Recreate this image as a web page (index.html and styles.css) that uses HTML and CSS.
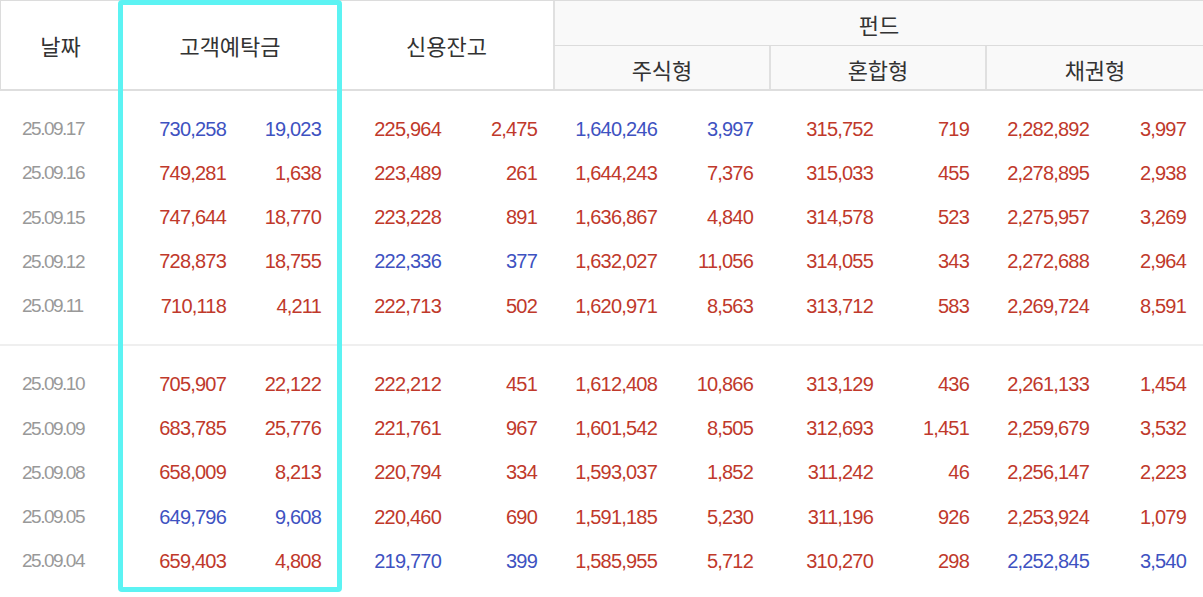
FILE: index.html
```html
<!DOCTYPE html>
<html lang="ko">
<head>
<meta charset="utf-8">
<title>증시 자금 동향</title>
<link rel="stylesheet" href="styles.css">
</head>
<body>
<div class="board">
  <div class="head">
    <div class="hc span2 first">날짜</div>
    <div class="hc span2">고객예탁금</div>
    <div class="hc span2">신용잔고</div>
    <div class="hc fund fund-top">펀드</div>
    <div class="hc fund sub sub-first">주식형</div>
    <div class="hc fund sub">혼합형</div>
    <div class="hc fund sub">채권형</div>
  </div>

  <div class="group">
    <div class="row"><span class="d">25.09.17</span><span class="b">730,258</span><span class="b">19,023</span><span class="r">225,964</span><span class="r">2,475</span><span class="b">1,640,246</span><span class="b">3,997</span><span class="r">315,752</span><span class="r">719</span><span class="r">2,282,892</span><span class="r">3,997</span></div>
    <div class="row"><span class="d">25.09.16</span><span class="r">749,281</span><span class="r">1,638</span><span class="r">223,489</span><span class="r">261</span><span class="r">1,644,243</span><span class="r">7,376</span><span class="r">315,033</span><span class="r">455</span><span class="r">2,278,895</span><span class="r">2,938</span></div>
    <div class="row"><span class="d">25.09.15</span><span class="r">747,644</span><span class="r">18,770</span><span class="r">223,228</span><span class="r">891</span><span class="r">1,636,867</span><span class="r">4,840</span><span class="r">314,578</span><span class="r">523</span><span class="r">2,275,957</span><span class="r">3,269</span></div>
    <div class="row"><span class="d">25.09.12</span><span class="r">728,873</span><span class="r">18,755</span><span class="b">222,336</span><span class="b">377</span><span class="r">1,632,027</span><span class="r">11,056</span><span class="r">314,055</span><span class="r">343</span><span class="r">2,272,688</span><span class="r">2,964</span></div>
    <div class="row"><span class="d">25.09.11</span><span class="r">710,118</span><span class="r">4,211</span><span class="r">222,713</span><span class="r">502</span><span class="r">1,620,971</span><span class="r">8,563</span><span class="r">313,712</span><span class="r">583</span><span class="r">2,269,724</span><span class="r">8,591</span></div>
  </div>
  <div class="group sep">
    <div class="row"><span class="d">25.09.10</span><span class="r">705,907</span><span class="r">22,122</span><span class="r">222,212</span><span class="r">451</span><span class="r">1,612,408</span><span class="r">10,866</span><span class="r">313,129</span><span class="r">436</span><span class="r">2,261,133</span><span class="r">1,454</span></div>
    <div class="row"><span class="d">25.09.09</span><span class="r">683,785</span><span class="r">25,776</span><span class="r">221,761</span><span class="r">967</span><span class="r">1,601,542</span><span class="r">8,505</span><span class="r">312,693</span><span class="r">1,451</span><span class="r">2,259,679</span><span class="r">3,532</span></div>
    <div class="row"><span class="d">25.09.08</span><span class="r">658,009</span><span class="r">8,213</span><span class="r">220,794</span><span class="r">334</span><span class="r">1,593,037</span><span class="r">1,852</span><span class="r">311,242</span><span class="r">46</span><span class="r">2,256,147</span><span class="r">2,223</span></div>
    <div class="row"><span class="d">25.09.05</span><span class="b">649,796</span><span class="b">9,608</span><span class="r">220,460</span><span class="r">690</span><span class="r">1,591,185</span><span class="r">5,230</span><span class="r">311,196</span><span class="r">926</span><span class="r">2,253,924</span><span class="r">1,079</span></div>
    <div class="row"><span class="d">25.09.04</span><span class="r">659,403</span><span class="r">4,808</span><span class="b">219,770</span><span class="b">399</span><span class="r">1,585,955</span><span class="r">5,712</span><span class="r">310,270</span><span class="r">298</span><span class="b">2,252,845</span><span class="b">3,540</span></div>
  </div>

  <div class="highlight"></div>
</div>
</body>
</html>
```

FILE: styles.css
```css
html, body {
  margin: 0;
  padding: 0;
  background: #ffffff;
}

body {
  width: 1203px;
  height: 597px;
  overflow: hidden;
  font-family: "Liberation Sans", "Noto Sans CJK KR", sans-serif;
}

.board {
  position: relative;
  width: 1203px;
}

/* ---------- header ---------- */
.head {
  display: grid;
  grid-template-columns: 120px 220px 213px 216px 216px 1fr;
  grid-template-rows: 45px 43px;
  border-top: 1px solid #dcdcdc;
  border-bottom: 2px solid #dedede;
  font-family: "Noto Sans CJK KR", "Liberation Sans", sans-serif;
  font-size: 22px;
  color: #333333;
}

.hc {
  display: flex;
  align-items: center;
  justify-content: center;
  background: #ffffff;
}

.span2 {
  grid-row: span 2;
}

.first {
  border-left: 1px solid #dcdcdc;
}

.fund {
  background: #f9f9f9;
}

.fund-top {
  grid-column: 4 / 7;
  border-left: 2px solid #e0e0e0;
  border-bottom: 1px solid #dcdcdc;
  padding-top: 1px;
}

.sub {
  border-left: 2px solid #e0e0e0;
  padding-top: 2px;
}

.sub-first {
  border-left: 2px solid #e0e0e0;
}

/* ---------- body ---------- */
.group {
  padding: 16px 0;
}

.group.sep {
  border-top: 2px solid #efefef;
}

.row {
  display: grid;
  grid-template-columns: 120px 106px 95px 120px 96px 120px 96px 120px 96px 120px 97px 1fr;
  height: 44.25px;
  align-items: center;
  font-size: 20px;
  letter-spacing: -0.8px;
}

.row span {
  text-align: right;
  white-space: nowrap;
}

.row .d {
  text-align: left;
  padding-left: 22px;
  font-size: 19px;
  letter-spacing: -1.5px;
  color: #999999;
}

.r {
  color: #c0392b;
}

.b {
  color: #3e52c1;
}

/* ---------- cyan highlight overlay ---------- */
.highlight {
  position: absolute;
  left: 118px;
  top: 0;
  width: 224px;
  height: 592px;
  box-sizing: border-box;
  border: 5px solid #5cf3f3;
  border-radius: 4px;
  pointer-events: none;
}
```
